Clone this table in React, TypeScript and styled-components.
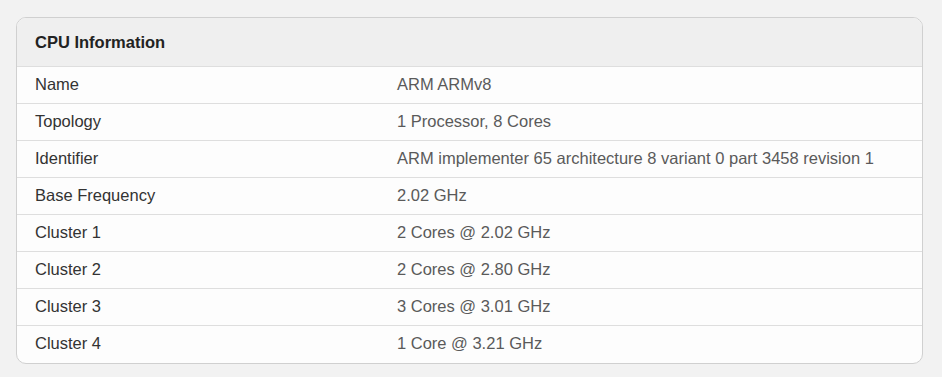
import React from "react";
import styled, { createGlobalStyle } from "styled-components";

const Global = createGlobalStyle`
  html, body { margin: 0; padding: 0; background: #f2f2f2; }
  body { font-family: "Liberation Sans", Arial, sans-serif; }
`;

const Page = styled.div`
  padding: 17px 19px 15px 16px;
`;

const Card = styled.div`
  border: 1px solid #d0d0d0;
  border-radius: 10px;
  background: #fdfdfd;
  overflow: hidden;
`;

const Header = styled.div`
  background: #efefef;
  height: 48px;
  display: flex;
  align-items: center;
  padding: 0 18px;
  box-sizing: border-box;
  font-weight: bold;
  font-size: 16.5px;
  color: #222;
`;

const Table = styled.table`
  width: 100%;
  border-collapse: collapse;
  table-layout: fixed;
`;

const Row = styled.tr`
  border-top: 1px solid #dedede;
  height: 37px;
`;

const Label = styled.td`
  width: 40%;
  padding: 0 18px 1px;
  font-size: 16.5px;
  color: #333;
  box-sizing: border-box;
`;

const Value = styled.td`
  padding: 0 18px 1px;
  font-size: 16.5px;
  color: #5a5a5a;
`;

const rows: [string, string][] = [
  ["Name", "ARM ARMv8"],
  ["Topology", "1 Processor, 8 Cores"],
  ["Identifier", "ARM implementer 65 architecture 8 variant 0 part 3458 revision 1"],
  ["Base Frequency", "2.02 GHz"],
  ["Cluster 1", "2 Cores @ 2.02 GHz"],
  ["Cluster 2", "2 Cores @ 2.80 GHz"],
  ["Cluster 3", "3 Cores @ 3.01 GHz"],
  ["Cluster 4", "1 Core @ 3.21 GHz"],
];

export default function App() {
  return (
    <Page>
      <Global />
      <Card>
        <Header>CPU Information</Header>
        <Table>
          <tbody>
            {rows.map(([k, v]) => (
              <Row key={k}>
                <Label>{k}</Label>
                <Value>{v}</Value>
              </Row>
            ))}
          </tbody>
        </Table>
      </Card>
    </Page>
  );
}
